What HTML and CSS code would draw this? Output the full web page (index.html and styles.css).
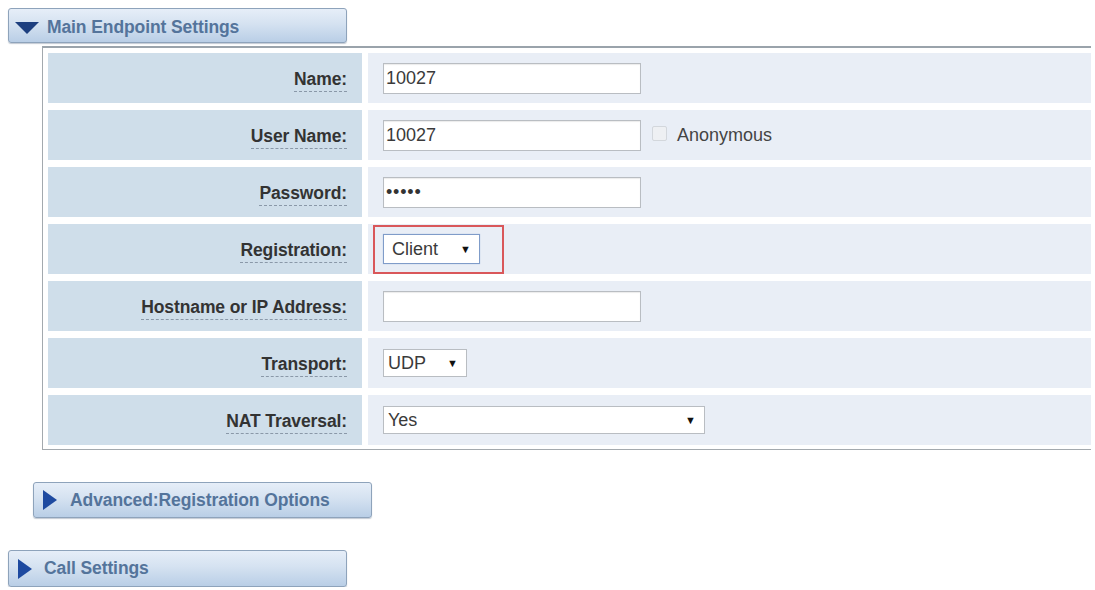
FILE: index.html
```html
<!DOCTYPE html>
<html>
<head>
<meta charset="utf-8">
<link rel="stylesheet" href="styles.css">
</head>
<body>
<div class="page">
  <div class="sec-btn sec-main">
    <span class="tri-down"></span>
    <span class="sec-title">Main Endpoint Settings</span>
  </div>
  <div class="panel">
    <div class="row">
      <div class="lbl"><span>Name:</span></div>
      <div class="val"><div class="input">10027</div></div>
    </div>
    <div class="row">
      <div class="lbl"><span>User Name:</span></div>
      <div class="val"><div class="input">10027</div><span class="chk"></span><span class="chk-label">Anonymous</span></div>
    </div>
    <div class="row">
      <div class="lbl"><span>Password:</span></div>
      <div class="val"><div class="input pw">•••••</div></div>
    </div>
    <div class="row">
      <div class="lbl"><span>Registration:</span></div>
      <div class="val"><div class="highlight"><div class="select sel-client focus">Client<span class="arrow">▼</span></div></div></div>
    </div>
    <div class="row">
      <div class="lbl"><span>Hostname or IP Address:</span></div>
      <div class="val"><div class="input"></div></div>
    </div>
    <div class="row">
      <div class="lbl"><span>Transport:</span></div>
      <div class="val"><div class="select sel-udp">UDP<span class="arrow">▼</span></div></div>
    </div>
    <div class="row">
      <div class="lbl"><span>NAT Traversal:</span></div>
      <div class="val"><div class="select sel-nat">Yes<span class="arrow">▼</span></div></div>
    </div>
  </div>
  <div class="sec-btn sec-adv">
    <span class="tri-right"></span>
    <span class="sec-title">Advanced:Registration Options</span>
  </div>
  <div class="sec-btn sec-call">
    <span class="tri-right"></span>
    <span class="sec-title">Call Settings</span>
  </div>
</div>
</body>
</html>
```
FILE: styles.css
```css
html, body {
  margin: 0;
  padding: 0;
  background: #ffffff;
}
body {
  font-family: "Liberation Sans", Arial, sans-serif;
  color: #333;
}
.page {
  padding: 8px 0 0 8px;
  display: flex;
  flex-direction: column;
  align-items: flex-start;
}
.sec-btn {
  box-sizing: border-box;
  width: 339px;
  height: 35px;
  border: 1px solid #8ea3bb;
  border-radius: 3px;
  background: linear-gradient(#e6eef8 0%, #d5e2f1 45%, #b9cee6 100%);
  box-shadow: 0 1px 1px rgba(80,100,130,0.35);
  display: flex;
  align-items: center;
  padding-left: 6px;
  gap: 8px;
}
.sec-main {
  padding-top: 3px;
}
.sec-title {
  font-weight: bold;
  font-size: 17.5px;
  color: #54749b;
  letter-spacing: -0.1px;
}
.tri-down {
  width: 0;
  height: 0;
  border-left: 12px solid transparent;
  border-right: 12px solid transparent;
  border-top: 12px solid #1d3f7f;
  margin-top: 2px;
}
.tri-right {
  width: 0;
  height: 0;
  border-top: 10px solid transparent;
  border-bottom: 10px solid transparent;
  border-left: 14px solid #1e4aa0;
  margin-left: 3px;
  margin-right: 2px;
}
.panel {
  box-sizing: border-box;
  margin-top: 3px;
  margin-left: 34px;
  width: 1049px;
  border: 1px solid #a3a9ae;
  border-right: none;
  border-top: 2px solid #9aa3ab;
  padding: 5px 0 4px 5px;
  display: flex;
  flex-direction: column;
  gap: 7px;
}
.row {
  display: flex;
  height: 50px;
  gap: 6px;
}
.lbl {
  width: 314px;
  background: #cfdeea;
  display: flex;
  align-items: center;
  justify-content: flex-end;
  padding-right: 15px;
  box-sizing: border-box;
}
.lbl span {
  font-weight: bold;
  font-size: 17.5px;
  letter-spacing: -0.1px;
  color: #333;
  border-bottom: 1px dashed #8a98a8;
  padding-bottom: 2px;
  margin-top: 4px;
  line-height: 20px;
}
.val {
  flex: 1;
  background: #e9eef6;
  display: flex;
  align-items: center;
  padding-left: 15px;
}
.input {
  box-sizing: border-box;
  width: 258px;
  height: 31px;
  background: #fff;
  border: 1px solid #b9bdc2;
  box-shadow: inset 0 1px 1px rgba(0,0,0,0.08);
  font-size: 18px;
  color: #3a3a3a;
  display: flex;
  align-items: center;
  padding-left: 2px;
}
.input.pw {
  font-size: 18px;
  letter-spacing: 0.8px;
  color: #333;
}
.chk {
  box-sizing: border-box;
  width: 15px;
  height: 15px;
  margin-left: 11px;
  margin-bottom: 4px;
  border: 1px solid #d3d7dc;
  background: #eef0f3;
  border-radius: 2px;
}
.chk-label {
  margin-left: 10px;
  font-size: 18px;
  color: #444;
}
.highlight {
  box-sizing: border-box;
  margin-left: -10px;
  width: 131px;
  height: 49px;
  border: 2px solid #d9575a;
  display: flex;
  align-items: center;
  padding-left: 8px;
}
.select {
  box-sizing: border-box;
  height: 29px;
  background: #fff;
  border: 1px solid #b9bdc2;
  font-size: 18px;
  color: #3a3a3a;
  display: flex;
  align-items: center;
  padding-left: 4px;
}
.select .arrow {
  font-size: 11px;
  color: #111;
  margin-left: auto;
  margin-right: 8px;
}
.select.focus {
  border: 1px solid #7f9cc9;
  box-shadow: 0 0 1px #a9bde0;
}
.sel-client {
  width: 97px;
  height: 30px;
  padding-left: 8px;
}
.sel-udp {
  width: 84px;
  height: 28px;
}
.sel-nat {
  width: 322px;
  height: 28px;
}
.sec-adv {
  margin-top: 32px;
  margin-left: 25px;
  height: 36px;
  gap: 11px;
}
.sec-call {
  margin-top: 32px;
  height: 37px;
  gap: 10px;
}
```
